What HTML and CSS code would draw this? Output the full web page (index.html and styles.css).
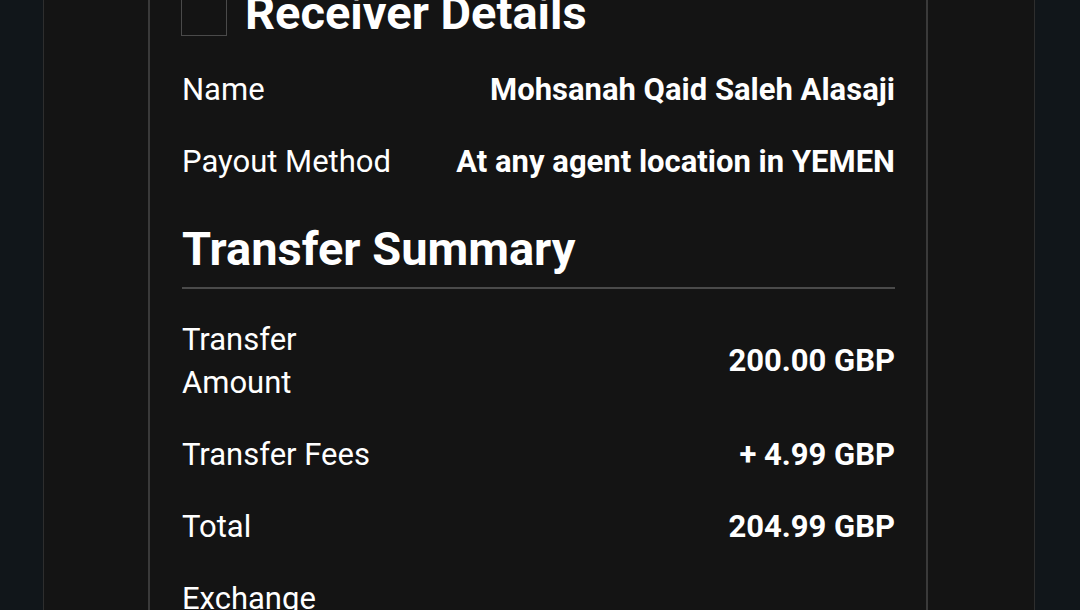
FILE: index.html
```html
<!DOCTYPE html>
<html lang="en">
<head>
    <meta charset="UTF-8">
    <meta name="viewport" content="width=device-width, initial-scale=1.0">
    <title>Transfer Review</title>
    <link rel="stylesheet" href="styles.css">
</head>
<body>
    <div class="page">
        <div class="card">
            <div class="section-head">
                <span class="checkbox"></span>
                <h2>Receiver Details</h2>
            </div>
            <div class="row">
                <span class="label">Name</span>
                <span class="value">Mohsanah Qaid Saleh Alasaji</span>
            </div>
            <div class="row">
                <span class="label">Payout Method</span>
                <span class="value">At any agent location in YEMEN</span>
            </div>

            <h1 class="summary-title">Transfer Summary</h1>
            <div class="summary">
                <div class="row">
                    <span class="label narrow">Transfer Amount</span>
                    <span class="value">200.00 GBP</span>
                </div>
                <div class="row">
                    <span class="label narrow">Transfer Fees</span>
                    <span class="value">+ 4.99 GBP</span>
                </div>
                <div class="row">
                    <span class="label narrow">Total</span>
                    <span class="value">204.99 GBP</span>
                </div>
                <div class="row row-bottom">
                    <span class="label narrow">Exchange Rate</span>
                    <span class="value">1 GBP = 301.50 YER</span>
                </div>
            </div>
        </div>
    </div>
</body>
</html>
```

FILE: styles.css
```css
/* Фон страницы */
body {
    margin: 0;
    background-color: #11161a;
    font-family: Roboto, "Noto Sans", Arial, sans-serif;
    color: #ffffff;
    height: 610px;
    overflow: hidden;
}

/* Центральная панель */
.page {
    width: 992px;
    margin: 0 0 0 43px;
    min-height: 100%;
    box-sizing: border-box;
    background-color: #141414;
    border-left: 1px solid #2e2e2e;
    border-right: 1px solid #2e2e2e;
    padding: 0 106px 0 104px;
}

/* Карточка с деталями */
.card {
    margin-top: -46px;
    min-height: 700px;
    border: 2px solid #3a3a3a;
    border-top: none;
    padding: 0 31px 0 32px;
    box-sizing: border-box;
}

.section-head {
    display: flex;
    align-items: center;
    gap: 18px;
    padding-top: 31px;
    margin-bottom: 12px;
}

.checkbox {
    width: 44px;
    height: 44px;
    margin-left: -1px;
    border: 1px solid #4a4a4a;
    flex: none;
}

.section-head h2 {
    margin: 0;
    font-size: 47px;
    font-weight: bold;
    line-height: 1.2;
}

.row {
    display: flex;
    justify-content: space-between;
    align-items: center;
    padding: 14.5px 0;
    font-size: 31px;
    line-height: 43px;
}

.row-bottom {
    align-items: flex-end;
}

.label {
    color: #ffffff;
}

.label.narrow {
    width: 200px;
}

.value {
    font-weight: bold;
    text-align: right;
}

.summary-title {
    margin: 24px 0 0 0;
    padding-bottom: 10px;
    font-size: 47px;
    line-height: 56px;
    border-bottom: 2px solid #4a4a4a;
}

.summary {
    padding-top: 14px;
}
```
